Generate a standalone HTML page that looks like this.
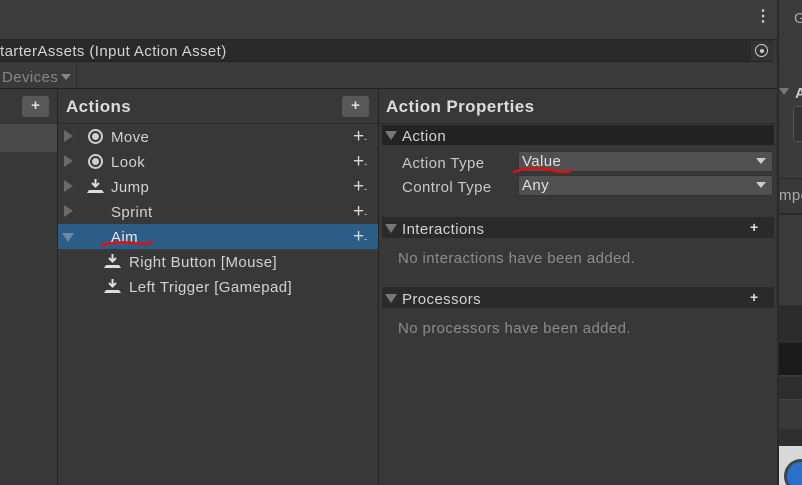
<!DOCTYPE html><html><head><style>
html,body{margin:0;width:802px;height:485px;overflow:hidden}
body{background:#383838;font-family:"Liberation Sans",sans-serif;color:#d2d2d2;font-size:14px;position:relative}
div{position:absolute;box-sizing:border-box}
.t{white-space:nowrap;letter-spacing:0.4px}
.pl{color:#d8d8d8;font-size:19px;line-height:14px;letter-spacing:0}
.pl small{font-size:9px}
.tri{width:0;height:0;border-top:6px solid transparent;border-bottom:6px solid transparent;border-left:9px solid #6a6a6a}
.trd{width:0;height:0;border-left:6px solid transparent;border-right:6px solid transparent;border-top:9px solid #777}
.circ{width:15px;height:15px;border-radius:50%;border:2px solid #cfcfcf}
.circ::after{content:"";position:absolute;left:2px;top:2px;width:7px;height:7px;border-radius:50%;background:#cfcfcf}
</style></head><body>
<div style="left:0;top:0;width:778px;height:40px;background:#3c3c3c;border-bottom:1px solid #242424"></div>
<div class="t" style="left:755px;top:6px;font-size:16px;color:#ccc;font-weight:bold">⋮</div>
<div style="left:0;top:40px;width:773px;height:22px;background:#2a2a2a;border-bottom:1px solid #222"></div>
<div class="t" style="left:0;top:43px;font-size:15px;color:#d4d4d4">tarterAssets (Input Action Asset)</div>
<div style="left:751px;top:41px;width:22px;height:20px;background:#333"></div>
<div style="left:755px;top:44px;width:13px;height:13px;border-radius:50%;border:1.5px solid #ccc"></div>
<div style="left:759.5px;top:48.5px;width:4px;height:4px;border-radius:50%;background:#ccc"></div>
<div style="left:0;top:62px;width:778px;height:27px;background:#3a3a3a;border-bottom:1px solid #232323"></div>
<div style="left:76px;top:63px;width:1px;height:25px;background:#2b2b2b"></div>
<div class="t" style="left:2px;top:69px;font-size:15px;color:#888">Devices</div>
<div style="left:61px;top:74px;border-left:5px solid transparent;border-right:5px solid transparent;border-top:6px solid #888"></div>
<div style="left:0;top:89px;width:58px;height:396px;background:#383838;border-right:1px solid #242424"></div>
<div style="left:0;top:124px;width:57px;height:28px;background:#4a4a4a"></div>
<div style="left:22px;top:96px;width:27px;height:21px;background:#585858;border-radius:3px;color:#ddd;text-align:center;font-size:15px;line-height:20px;font-weight:bold">+</div>
<div class="t" style="left:66px;top:97px;font-size:17px;font-weight:bold;color:#dcdcdc">Actions</div>
<div style="left:342px;top:96px;width:27px;height:21px;background:#585858;border-radius:3px;color:#ddd;text-align:center;font-size:15px;line-height:20px;font-weight:bold">+</div>
<div style="left:58px;top:123px;width:320px;height:1px;background:#2a2a2a"></div>
<div style="left:378px;top:89px;width:1px;height:396px;background:#242424"></div>
<div style="left:58px;top:224px;width:320px;height:25px;background:#2c5d87"></div>
<div class="tri" style="left:64px;top:130px"></div><div class="tri" style="left:64px;top:155px"></div><div class="tri" style="left:64px;top:180px"></div><div class="tri" style="left:64px;top:205px"></div>
<div class="trd" style="left:62px;top:233px;border-top-color:#6b8aa6"></div>
<div class="circ" style="left:88px;top:129px"></div><div class="circ" style="left:88px;top:154px"></div>
<svg style="position:absolute;left:86px;top:178px" width="19" height="17"><path d="M9.5 1v7M6 5l3.5 3.5L13 5" stroke="#ddd" stroke-width="2" fill="none"/><path d="M3 12h13l2 3H1z" fill="#ddd"/></svg>
<svg style="position:absolute;left:103px;top:253px" width="19" height="17"><path d="M9.5 1v7M6 5l3.5 3.5L13 5" stroke="#ddd" stroke-width="2" fill="none"/><path d="M3 12h13l2 3H1z" fill="#ddd"/></svg>
<svg style="position:absolute;left:103px;top:278px" width="19" height="17"><path d="M9.5 1v7M6 5l3.5 3.5L13 5" stroke="#ddd" stroke-width="2" fill="none"/><path d="M3 12h13l2 3H1z" fill="#ddd"/></svg>
<div class="t" style="left:111px;top:129px;font-size:15px">Move</div>
<div class="t" style="left:111px;top:154px;font-size:15px">Look</div>
<div class="t" style="left:111px;top:179px;font-size:15px">Jump</div>
<div class="t" style="left:111px;top:204px;font-size:15px">Sprint</div>
<div class="t" style="left:111px;top:229px;font-size:15px;color:#e8e8e8">Aim</div>
<svg style="position:absolute;left:100px;top:238px" width="55" height="10"><path d="M2 7Q20 3 34 5T52 4" stroke="#e01010" stroke-width="2.5" fill="none" stroke-linecap="round"/></svg>
<div class="t" style="left:129px;top:254px;font-size:15px">Right Button [Mouse]</div>
<div class="t" style="left:129px;top:279px;font-size:15px">Left Trigger [Gamepad]</div>
<div class="t pl" style="left:353px;top:130px">+<small>-</small></div>
<div class="t pl" style="left:353px;top:155px">+<small>-</small></div>
<div class="t pl" style="left:353px;top:180px">+<small>-</small></div>
<div class="t pl" style="left:353px;top:205px">+<small>-</small></div>
<div class="t pl" style="left:353px;top:230px">+<small>-</small></div>
<div class="t" style="left:386px;top:97px;font-size:17px;font-weight:bold;color:#dcdcdc">Action Properties</div>
<div style="left:379px;top:123px;width:399px;height:1px;background:#2a2a2a"></div>
<div style="left:382px;top:125px;width:392px;height:20px;background:#232323"></div>
<div class="trd" style="left:385px;top:131px"></div>
<div class="t" style="left:402px;top:128px;font-size:15px">Action</div>
<div class="t" style="left:402px;top:155px;font-size:15px;color:#c8c8c8">Action Type</div>
<div class="t" style="left:402px;top:179px;font-size:15px;color:#c8c8c8">Control Type</div>
<div style="left:518px;top:151px;width:255px;height:21px;background:#515151;border-radius:3px;border:1px solid #333"></div>
<div style="left:518px;top:175px;width:255px;height:21px;background:#515151;border-radius:3px;border:1px solid #333"></div>
<div class="t" style="left:522px;top:153px;font-size:15px;color:#e0e0e0">Value</div>
<div class="t" style="left:522px;top:177px;font-size:15px;color:#e0e0e0">Any</div>
<div style="left:756px;top:158px;border-left:5px solid transparent;border-right:5px solid transparent;border-top:6px solid #ccc"></div>
<div style="left:756px;top:182px;border-left:5px solid transparent;border-right:5px solid transparent;border-top:6px solid #ccc"></div>
<svg style="position:absolute;left:512px;top:164px" width="62" height="12"><path d="M2 8Q20 2 38 6T59 6" stroke="#e01010" stroke-width="2.5" fill="none" stroke-linecap="round"/></svg>
<div style="left:382px;top:217px;width:392px;height:21px;background:#2a2a2a"></div>
<div class="trd" style="left:385px;top:224px"></div>
<div class="t" style="left:402px;top:221px;font-size:15px">Interactions</div>
<div class="t" style="left:750px;top:219px;font-size:14px;font-weight:bold;color:#ddd">+</div>
<div class="t" style="left:398px;top:250px;font-size:15px;color:#8c8c8c">No interactions have been added.</div>
<div style="left:382px;top:287px;width:392px;height:21px;background:#2a2a2a"></div>
<div class="trd" style="left:385px;top:294px"></div>
<div class="t" style="left:402px;top:291px;font-size:15px">Processors</div>
<div class="t" style="left:750px;top:289px;font-size:14px;font-weight:bold;color:#ddd">+</div>
<div class="t" style="left:398px;top:320px;font-size:15px;color:#8c8c8c">No processors have been added.</div>
<div style="left:777px;top:0;width:2px;height:485px;background:#2a2a2a"></div>
<div style="left:779px;top:0;width:23px;height:485px;background:#3a3a3a;overflow:hidden">
<div class="t" style="left:15px;top:10px;font-size:15px;color:#aaa">G</div>
<div style="left:0;top:88px;border-left:5px solid transparent;border-right:5px solid transparent;border-top:7px solid #777"></div>
<div class="t" style="left:16px;top:85px;font-size:15px;color:#ccc;font-weight:bold">A</div>
<div style="left:14px;top:106px;width:12px;height:36px;border:1px solid #555;border-radius:3px;background:#333"></div>
<div style="left:0;top:178px;width:23px;height:37px;background:#383838;border-top:1px solid #2a2a2a;border-bottom:2px solid #2a2a2a"></div>
<div class="t" style="left:0;top:187px;font-size:15px;color:#aaa">mpo</div>
<div style="left:0;top:305px;width:23px;height:38px;background:#2c2c2c"></div>
<div style="left:0;top:343px;width:23px;height:32px;background:#1a1a1a"></div>
<div style="left:0;top:377px;width:23px;height:22px;background:#2e2e2e"></div>
<div style="left:0;top:399px;width:23px;height:30px;background:#393939;border-top:1px solid #444"></div>
<div style="left:0;top:429px;width:23px;height:17px;background:#2f2f2f"></div>
<div style="left:0;top:446px;width:23px;height:39px;background:#d8d8d8"></div>
<div style="left:5px;top:459px;width:34px;height:34px;border-radius:50%;background:#2b6fc9;border:3px solid #444"></div>
</div>
</body></html>
